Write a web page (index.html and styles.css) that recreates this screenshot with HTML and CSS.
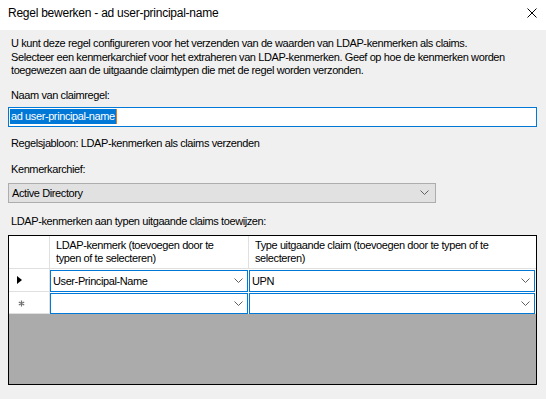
FILE: index.html
```html
<!DOCTYPE html>
<html lang="nl">
<head>
  <meta charset="UTF-8">
  <title>Regel bewerken</title>
  <link rel="stylesheet" href="styles.css">
</head>
<body>
  <div class="titlebar">
    <span class="title">Regel bewerken - ad user-principal-name</span>
    <svg class="close" width="10" height="10" viewBox="0 0 10 10">
      <path d="M0.5 0.5 L9.5 9.5 M9.5 0.5 L0.5 9.5" stroke="#000" stroke-width="1"/>
    </svg>
  </div>

  <div class="content">
    <p class="intro">U kunt deze regel configureren voor het verzenden van de waarden van LDAP-kenmerken als claims.<br>Selecteer een kenmerkarchief voor het extraheren van LDAP-kenmerken. Geef op hoe de kenmerken worden<br>toegewezen aan de uitgaande claimtypen die met de regel worden verzonden.</p>

    <div class="label lbl-name">Naam van claimregel:</div>
    <div class="textbox"><span class="selected">ad user-principal-name</span></div>

    <div class="label lbl-template">Regelsjabloon: LDAP-kenmerken als claims verzenden</div>

    <div class="label lbl-store">Kenmerkarchief:</div>
    <div class="combo">
      <span>Active Directory</span>
      <svg class="chev" width="9" height="5" viewBox="0 0 9 5"><path d="M0.5 0.5 L4.5 4.5 L8.5 0.5" fill="none" stroke="#606060"/></svg>
    </div>

    <div class="label lbl-map">LDAP-kenmerken aan typen uitgaande claims toewijzen:</div>

    <div class="datagrid">
      <div class="hdr corner"></div>
      <div class="hdr">LDAP-kenmerk (toevoegen door te<br>typen of te selecteren)</div>
      <div class="hdr">Type uitgaande claim (toevoegen door te typen of te<br>selecteren)</div>

      <div class="rowhdr"><span class="arrow"></span></div>
      <div class="cell">
        <div class="cellbox"><span>User-Principal-Name</span>
          <svg class="chev" width="9" height="5" viewBox="0 0 9 5"><path d="M0.5 0.5 L4.5 4.5 L8.5 0.5" fill="none" stroke="#606060"/></svg>
        </div>
      </div>
      <div class="cell">
        <div class="cellbox"><span>UPN</span>
          <svg class="chev" width="9" height="5" viewBox="0 0 9 5"><path d="M0.5 0.5 L4.5 4.5 L8.5 0.5" fill="none" stroke="#606060"/></svg>
        </div>
      </div>

      <div class="rowhdr">
        <svg class="newrow" width="7" height="7" viewBox="0 0 7 7">
          <path d="M3.5 0.5 V6.5 M0.8 2 L6.2 5 M6.2 2 L0.8 5" stroke="#707070" stroke-width="1.2"/>
        </svg>
      </div>
      <div class="cell">
        <div class="cellbox"><span></span>
          <svg class="chev" width="9" height="5" viewBox="0 0 9 5"><path d="M0.5 0.5 L4.5 4.5 L8.5 0.5" fill="none" stroke="#606060"/></svg>
        </div>
      </div>
      <div class="cell">
        <div class="cellbox"><span></span>
          <svg class="chev" width="9" height="5" viewBox="0 0 9 5"><path d="M0.5 0.5 L4.5 4.5 L8.5 0.5" fill="none" stroke="#606060"/></svg>
        </div>
      </div>

      <div class="empty"></div>
    </div>
  </div>
</body>
</html>
```

FILE: styles.css
```css
body {
  margin: 0;
  width: 546px;
  height: 399px;
  overflow: hidden;
  background: #f0f0f0;
  font-family: 'Liberation Sans', Arial, sans-serif;
  font-size: 11px;
  letter-spacing: -0.4px;
  color: #000;
}
.titlebar {
  height: 30px;
  background: #fff;
  display: flex;
  align-items: center;
  justify-content: space-between;
  padding: 0 9px 0 8px;
  box-sizing: border-box;
}
.title {
  font-size: 12px;
  letter-spacing: -0.25px;
  padding-bottom: 4px;
}
.close {
  margin-bottom: 4px;
}
.content {
  padding: 0 9px 0 8px;
}
.intro {
  margin: 7px 0 0 0;
  padding-left: 3px;
  line-height: 13.5px;
  white-space: nowrap;
}
.label {
  padding-left: 3px;
  line-height: 14px;
}
.lbl-name { margin-top: 10px; }
.lbl-template { margin-top: 9px; }
.lbl-store { margin-top: 12px; }
.lbl-map { margin-top: 11px; }

.textbox {
  margin-top: 5px;
  height: 20px;
  box-sizing: border-box;
  border: 1px solid #0078d7;
  background: #fff;
  padding: 1px 1px;
  display: flex;
  align-items: center;
}
.selected {
  background: #0078d7;
  color: #fff;
  line-height: 15px;
  padding: 0 1px 0 1px;
  border-right: 1px solid #e87a1e;
}
.combo {
  margin-top: 7px;
  width: 428px;
  height: 20px;
  box-sizing: border-box;
  border: 1px solid #adadad;
  background: #e1e1e1;
  display: flex;
  align-items: center;
  justify-content: space-between;
  padding: 0 6px 0 3px;
}
.chev {
  display: block;
}

.datagrid {
  margin-top: 7px;
  height: 150px;
  box-sizing: border-box;
  border: 1px solid #000;
  background: #ababab;
  display: grid;
  grid-template-columns: 41px 199px 1fr;
  grid-template-rows: 33px 23px 22px 1fr;
}
.hdr {
  background: #fff;
  border-right: 1px solid #e0e0e0;
  border-bottom: 1px solid #e0e0e0;
  padding: 3px 6px 0 6px;
  line-height: 13px;
  white-space: nowrap;
}
.hdr:nth-child(3) {
  border-right: none;
  padding-left: 6px;
}
.rowhdr {
  background: #fff;
  border-right: 1px solid #e0e0e0;
  border-bottom: 1px solid #e0e0e0;
  display: flex;
  align-items: center;
  padding-left: 8px;
}
.arrow {
  width: 0;
  height: 0;
  border-top: 4.5px solid transparent;
  border-bottom: 4.5px solid transparent;
  border-left: 5px solid #000;
}
.newrow {
  display: block;
  margin-left: 1px;
  margin-top: 2px;
}
.cell {
  background: #fff;
  padding: 1px 1px 0 0;
  display: flex;
}
.cellbox {
  flex: 1;
  border: 1px solid #0078d7;
  background: #fff;
  display: flex;
  align-items: center;
  justify-content: space-between;
  padding: 0 4px 0 2px;
}
.empty {
  grid-column: 1 / 4;
}
```
